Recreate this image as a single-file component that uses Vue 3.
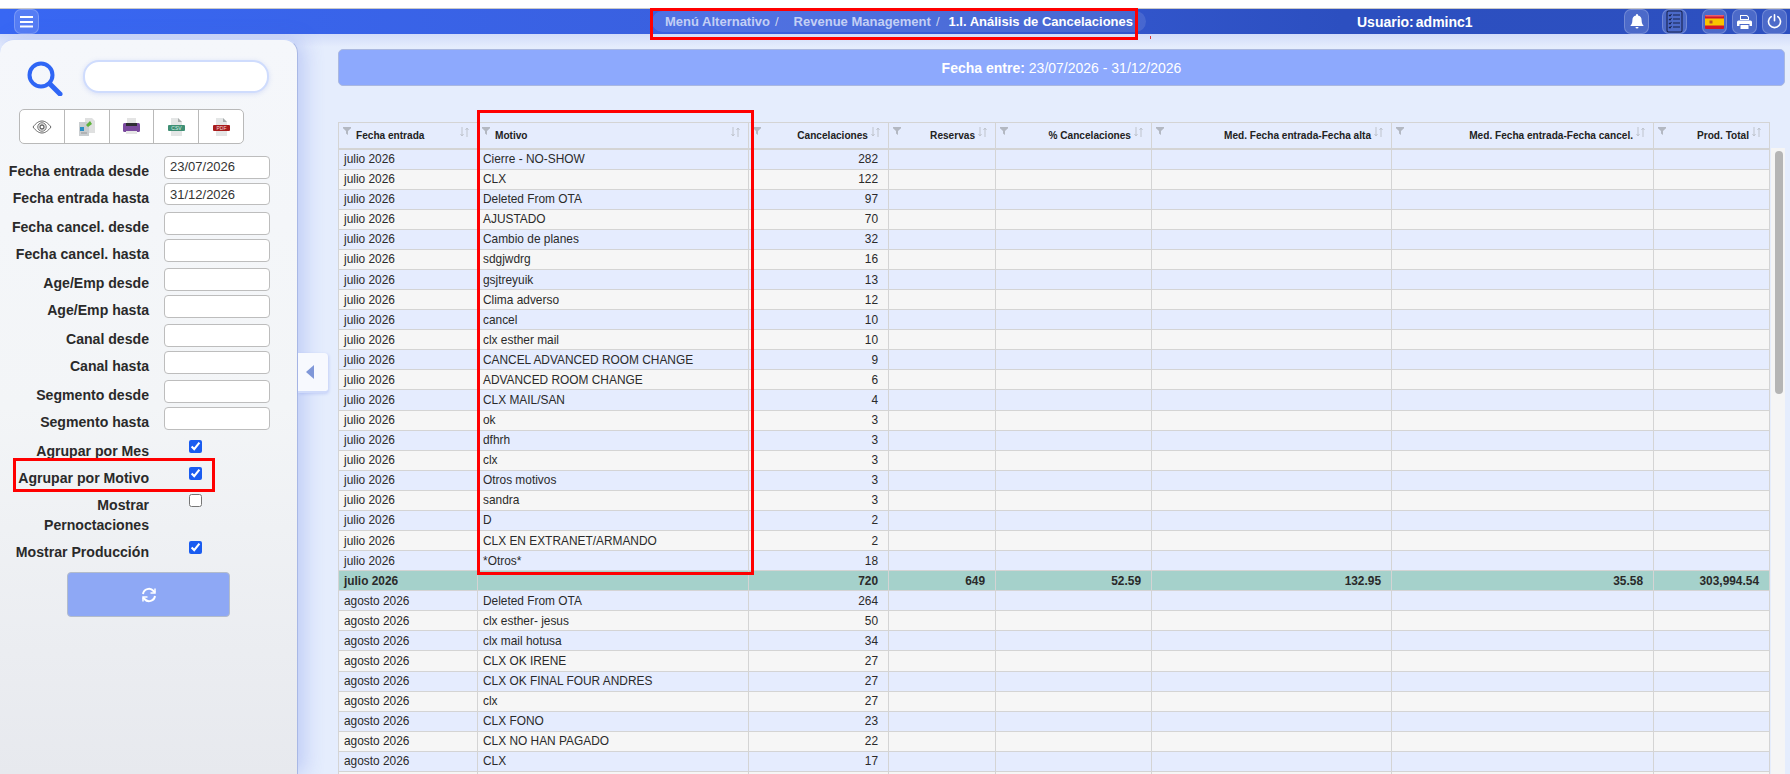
<template>
  <div class="page">
    <div class="top-strip"></div>
    <header class="topbar">
      <button class="bar-btn menu-btn">
        <svg width="13" height="12" viewBox="0 0 13 12"><path d="M0 1h13M0 6h13M0 10.6h13" stroke="#fff" stroke-width="2"/></svg>
      </button>
      <nav class="crumbs">
        <span>Menú Alternativo</span><i>/</i>
        <span>Revenue Management</span><i>/</i>
        <b>1.I. Análisis de Cancelaciones</b>
      </nav>
      <div class="user"><b>Usuario:</b><b class="user-name">adminc1</b></div>
      <div class="bar-icons">
        <button class="bar-btn">
          <svg width="14" height="15" viewBox="0 0 14 15"><path d="M7 0a1 1 0 0 1 1 1v.6A4.6 4.6 0 0 1 11.6 6c0 3.4 1 4.8 2.2 6H.2c1.200-1.200 2.200-2.600 2.200-6A4.600 4.600 0 0 1 6 1.600V1a1 1 0 0 1 1-1zM5.500 13h3a1.500 1.500 0 0 1-3 0z" fill="#fff"/></svg>
        </button>
        <button class="bar-btn list-btn">
          <svg width="17" height="23" viewBox="0 0 17 23" fill="none" stroke="#16224f" stroke-width="1.100"><rect x="1" y="1" width="15" height="21" rx="1.500"/><path d="M7 5h7M7 9h7M7 13h7M7 17h7M3 5l1 1 1.500-2M3 9l1 1 1.500-2M3 13l1 1 1.500-2M3 17l1 1 1.500-2"/></svg>
        </button>
        <button class="bar-btn flag-btn">
          <svg width="19" height="14" viewBox="0 0 19 14"><rect width="19" height="14" rx="1" fill="#d0142c"/><rect y="3.500" width="19" height="7" fill="#f8c300"/><rect width="19" height="1.500" rx="1" fill="#e8606c"/><rect x="4.500" y="5.500" width="3" height="3" fill="#b5502a"/></svg>
        </button>
        <button class="bar-btn">
          <svg width="15" height="14" viewBox="0 0 15 14"><path d="M3 0h7l2 2v3H3zM4 1v3h7V2.500L9.500 1zM1.500 5.500h12A1.500 1.500 0 0 1 15 7v4h-2.500V9h-10v2H0V7a1.500 1.500 0 0 1 1.500-1.500zM3.500 10h8v4h-8z" fill="#fff"/></svg>
        </button>
        <button class="bar-btn">
          <svg width="15" height="15" viewBox="0 0 15 15" fill="none" stroke="#fff" stroke-width="1.600" stroke-linecap="round"><path d="M4.200 2.600a6 6 0 1 0 6.600 0M7.500 .8v6"/></svg>
        </button>
      </div>
    </header>

    <div class="main">
      <aside class="sidebar">
        <div class="search-row">
          <svg class="search-icon" width="36" height="35" viewBox="0 0 36 35" fill="none" stroke="#2f66f5"><circle cx="14" cy="14" r="11.500" stroke-width="4"/><path d="M23 23l10 10" stroke-width="5" stroke-linecap="round"/></svg>
          <input class="search-input" type="text" />
        </div>

        <div class="tool-group">
          <button>
            <svg width="20" height="14" viewBox="0 0 20 14" fill="none" stroke="#666"><path d="M1 7c3-4 6-6 9-6s6 2 9 6c-3 4-6 6-9 6s-6-2-9-6z"/><circle cx="10" cy="7" r="4.200"/><circle cx="10" cy="7" r="2" stroke-width="1.300"/></svg>
          </button>
          <button>
            <svg width="16" height="18" viewBox="0 0 16 18"><path d="M6 0h7l3 3v12H6z" fill="#dfe0e0"/><path d="M0 4h8l2 2v12H0z" fill="#c9cdd0"/><rect x="1" y="9" width="4" height="4" fill="#2a8fc4"/><path d="M7 7l4-4 2 3-4 3z" fill="#5fb33c"/><path d="M2 15h6" stroke="#999"/></svg>
          </button>
          <button>
            <svg width="17" height="17" viewBox="0 0 17 17"><rect x="4" y="0" width="9" height="5" fill="#e4e4e4"/><rect x="0" y="5" width="17" height="9" rx="1.500" fill="#7b4a9e"/><rect x="3" y="5" width="11" height="3" fill="#2e2e33"/><rect x="3" y="13" width="11" height="3" fill="#e6e6e6"/></svg>
          </button>
          <button>
            <svg width="17" height="18" viewBox="0 0 17 18"><path d="M3 0h7l4 4v14H3z" fill="#e4e6e6"/><path d="M10 0v4h4z" fill="#a9adad"/><rect x="0" y="7" width="17" height="6" rx="1" fill="#3f8f74"/><text x="8.500" y="11.800" text-anchor="middle" font-size="5" font-family="Liberation Sans" fill="#d9efe7">CSV</text></svg>
          </button>
          <button>
            <svg width="17" height="18" viewBox="0 0 17 18"><path d="M3 0h7l4 4v14H3z" fill="#e4e6e6"/><path d="M10 0v4h4z" fill="#a9adad"/><rect x="0" y="7" width="17" height="6" rx="1" fill="#a81c1c"/><text x="8.500" y="11.800" text-anchor="middle" font-size="5" font-family="Liberation Sans" fill="#f3d9d9">PDF</text></svg>
          </button>
        </div>

        <form class="filters" @submit.prevent>
          <div v-for="(pair, i) in fieldPairs" :key="i" class="pair">
            <label v-for="f in pair" :key="f.label" class="field">
              <span>{{ f.label }}</span>
              <input type="text" :value="f.value" :class="{ clipped: f.clipped }" />
            </label>
          </div>
        </form>

        <div class="checks">
          <label v-for="c in checks" :key="c.label" class="check">
            <span>{{ c.label }}</span>
            <input type="checkbox" :checked="c.on" />
          </label>
        </div>

        <button class="refresh">
          <svg width="16" height="16" viewBox="0 0 16 16" fill="none" stroke="#fff" stroke-width="2"><path d="M2 7a6 6 0 0 1 10.500-3L14 5.500M14 9a6 6 0 0 1-10.500 3L2 10.500"/><path d="M14 1.500v4.500H9.500M2 14.500V10h4.500" stroke-width="1.500"/></svg>
        </button>
      </aside>

      <button class="collapse"><span class="tri"></span></button>

      <section class="content">
        <div class="band"><b>Fecha entre:</b> 23/07/2026 - 31/12/2026</div>

        <div class="grid-wrap">
          <table class="grid">
            <colgroup>
              <col v-for="c in columns" :key="c.label" :style="{ width: c.width + 'px' }" />
            </colgroup>
            <thead>
              <tr>
                <th v-for="c in columns" :key="c.label">
                  <div class="th-in">
                    <svg class="funnel" width="8" height="8" viewBox="0 0 8 8"><path d="M0 0h8v1.200L5 4v4L3 6.500V4L0 1.200z" fill="#b3b8c2"/></svg>
                    <span class="th-label" :class="{ num: c.num }">{{ c.label }}</span>
                    <svg class="sort" width="9" height="10" viewBox="0 0 9 10" fill="none" stroke="#bfc4cd"><path d="M2 0v9M.5 7L2 9l1.500-2M7 10V1M5.500 3L7 1l1.500 2"/></svg>
                  </div>
                </th>
              </tr>
            </thead>
            <tbody>
              <tr v-for="(r, i) in rows" :key="i" :class="rowClass(r)">
                <td>{{ r.month }}</td>
                <td>{{ r.reason }}</td>
                <td class="num">{{ r.total ? r.total[0] : r.count }}</td>
                <td v-for="n in 5" :key="n" class="num">{{ r.total ? r.total[n] : '' }}</td>
              </tr>
            </tbody>
          </table>
          <div class="scroll-track"><div class="scroll-thumb"></div></div>
        </div>
      </section>
    </div>

    <!-- marcas rojas sobre la captura -->
    <div class="mark mark-crumbs"></div>
    <div class="mark mark-motivo"></div>
    <div class="mark mark-check"></div>
    <div class="mark-tick"></div>
  </div>
</template>

<script setup>
const fieldPairs = [
  [
    { label: 'Fecha entrada desde', value: '23/07/2026' },
    { label: 'Fecha entrada hasta', value: '31/12/2026', clipped: true }
  ],
  [
    { label: 'Fecha cancel. desde', value: '' },
    { label: 'Fecha cancel. hasta', value: '' }
  ],
  [
    { label: 'Age/Emp desde', value: '' },
    { label: 'Age/Emp hasta', value: '' }
  ],
  [
    { label: 'Canal desde', value: '' },
    { label: 'Canal hasta', value: '' }
  ],
  [
    { label: 'Segmento desde', value: '' },
    { label: 'Segmento hasta', value: '' }
  ]
]

const checks = [
  { label: 'Agrupar por Mes', on: true },
  { label: 'Agrupar por Motivo', on: true },
  { label: 'Mostrar Pernoctaciones', on: false },
  { label: 'Mostrar Producción', on: true }
]

const columns = [
  { label: 'Fecha entrada', width: 139 },
  { label: 'Motivo', width: 271 },
  { label: 'Cancelaciones', width: 140, num: true },
  { label: 'Reservas', width: 107, num: true },
  { label: '% Cancelaciones', width: 156, num: true },
  { label: 'Med. Fecha entrada-Fecha alta', width: 240, num: true },
  { label: 'Med. Fecha entrada-Fecha cancel.', width: 262, num: true },
  { label: 'Prod. Total', width: 116, num: true }
]

const julio = [
  ['Cierre - NO-SHOW', 282], ['CLX', 122], ['Deleted From OTA', 97], ['AJUSTADO', 70],
  ['Cambio de planes', 32], ['sdgjwdrg', 16], ['gsjtreyuik', 13], ['Clima adverso', 12],
  ['cancel', 10], ['clx esther mail', 10], ['CANCEL ADVANCED ROOM CHANGE', 9],
  ['ADVANCED ROOM CHANGE', 6], ['CLX MAIL/SAN', 4], ['ok', 3], ['dfhrh', 3], ['clx', 3],
  ['Otros motivos', 3], ['sandra', 3], ['D', 2], ['CLX EN EXTRANET/ARMANDO', 2], ['*Otros*', 18]
]
const agosto = [
  ['Deleted From OTA', 264], ['clx esther- jesus', 50], ['clx mail hotusa', 34],
  ['CLX OK IRENE', 27], ['CLX OK FINAL FOUR ANDRES', 27], ['clx', 27], ['CLX FONO', 23],
  ['CLX NO HAN PAGADO', 22], ['CLX', 17], ['', '']
]

const toRows = (month, list) =>
  list.map(([reason, count], idx) => ({ month: reason ? month : '', reason, count, odd: idx % 2 === 0 }))

const rows = [
  ...toRows('julio 2026', julio),
  { month: 'julio 2026', reason: '', total: ['720', '649', '52.59', '132.95', '35.58', '303,994.54'] },
  ...toRows('agosto 2026', agosto)
]

function rowClass(r) {
  if (r.total) return 'total'
  return r.odd ? 'odd' : 'even'
}
</script>

<style>
html, body { margin: 0; background: #e5edfd; overflow: hidden; }
</style>

<style scoped>
.page {
  position: relative;
  width: 1790px; height: 774px;
  overflow: hidden;
  background: #e5edfd;
  font-family: "Liberation Sans", Arial, sans-serif;
  color: #262626;
}
.top-strip { height: 8px; background: #fff; border-bottom: 1px solid #c9c9c9; }

/* TOP BAR */
.topbar {
  height: 25px;
  display: flex; align-items: center;
  background: linear-gradient(90deg, #3867f3 0%, #3a5fdc 45%, #2c4fc0 75%, #2d50c0 100%);
  position: relative;
}
.bar-btn {
  width: 25px; height: 25px; padding: 0;
  display: flex; align-items: center; justify-content: center;
  background: rgba(255, 255, 255, 0.15);
  border: 1px solid rgba(255, 255, 255, 0.22);
  border-radius: 7px;
}
.menu-btn { margin-left: 14px; }
.crumbs {
  margin-left: 613px; width: 494px; height: 21px;
  box-sizing: border-box; padding-left: 13px;
  display: flex; align-items: center;
  background: rgba(255, 255, 255, 0.11);
  border-radius: 11px;
  font-size: 13px; font-weight: 700; color: #c3cff5;
  white-space: nowrap;
}
.crumbs i { font-style: normal; font-weight: 400; margin: 0 15px 0 5px; color: #cdd5ee; }
.crumbs b { color: #fff; margin-left: -6px; }
.user { margin-left: 211px; width: 267px; font-size: 14px; color: #fff; white-space: nowrap; }
.user-name { margin-left: 2px; }
.bar-icons { display: flex; }
.bar-icons .bar-btn:nth-child(2) { margin-left: 13px; }
.bar-icons .bar-btn:nth-child(3) { margin-left: 15px; }
.bar-icons .bar-btn:nth-child(4),
.bar-icons .bar-btn:nth-child(5) { margin-left: 5px; }

/* MAIN */
.main {
  display: flex; position: relative;
  height: 740px;
  background: linear-gradient(180deg, #d2dcf9 0, #e5edfd 13px);
}

/* SIDEBAR */
.sidebar {
  width: 298px; margin-top: 5px;
  flex: none; box-sizing: border-box;
  background: linear-gradient(180deg, #f5f7fb 0%, #f3f5f7 50%, #e7e9ee 100%);
  border-radius: 14px 14px 0 0;
  border-top: 1px solid #c9d6fb;
  border-right: 1px solid #a9b8e5;
  box-shadow: 7px 0 20px rgba(70, 100, 225, 0.24);
  z-index: 1;
}
.search-row { display: flex; align-items: flex-start; padding: 20px 0 0 27px; gap: 20px; }
.search-icon { margin-top: 1px; }
.search-input {
  width: 186px; height: 33px; box-sizing: border-box;
  background: #fff;
  border: 2px solid #cfdcfd; border-radius: 16px;
  box-shadow: 0 1px 5px rgba(80, 110, 230, 0.18);
  outline: none;
}
.tool-group {
  display: flex; margin: 13px 0 0 19px;
  width: 225px; height: 35px; box-sizing: border-box;
  background: #fff;
  border: 1px solid #b9b9b9; border-radius: 5px;
}
.tool-group button {
  flex: 1; padding: 0;
  background: transparent;
  border: 0; border-left: 1px solid #b9b9b9;
  display: flex; align-items: center; justify-content: center;
}
.tool-group button:first-child { border-left: 0; }

.filters { display: flex; flex-direction: column; gap: 6px; margin-top: 12px; }
.pair { display: flex; flex-direction: column; gap: 4px; }
.field { display: flex; align-items: flex-start; }
.field span {
  width: 149px; text-align: right;
  font-size: 14.100px; font-weight: 700; line-height: 16px;
  padding-top: 7px; color: #2a2a2a;
  white-space: nowrap;
}
.field input {
  width: 106px; height: 23px; margin-left: 15px;
  box-sizing: border-box; padding: 0 5px 2px;
  background: #fff;
  border: 1px solid #bdbdbd; border-radius: 4px;
  font: 13px "Liberation Sans", Arial, sans-serif; color: #333;
  outline: none;
}
.field input.clipped { height: 22px; padding-bottom: 0; }

.checks { margin-top: 10px; }
.check { display: flex; align-items: flex-start; }
.check span {
  width: 149px; text-align: right;
  font-size: 14.100px; font-weight: 700; line-height: 20px;
  padding: 1px 0 6px; color: #2a2a2a;
}
.check input {
  width: 13px; height: 13px;
  margin: 0 0 0 40px;
  accent-color: #1a5cf0;
}
.refresh {
  display: flex; align-items: center; justify-content: center;
  width: 163px; height: 45px;
  margin: 4px 0 0 67px;
  background: #8ea8f5;
  border: 1px solid #b3bccb; border-radius: 4px;
}

/* COLLAPSE TAB */
.collapse {
  position: absolute; left: 298px; top: 319px;
  width: 30px; height: 40px; padding: 0 0 0 8px;
  display: flex; align-items: center;
  background: #f7f9fe;
  border: 0; border-bottom: 2px solid #cfdafa;
  border-radius: 0 4px 4px 0;
  box-shadow: 1px 1px 3px rgba(70, 100, 225, 0.2);
  z-index: 2;
}
.tri {
  width: 0; height: 0;
  border-right: 8px solid #7f97d8;
  border-top: 7.500px solid transparent; border-bottom: 7.500px solid transparent;
}

/* CONTENT */
.content { flex: 1; min-width: 0; padding: 15px 5px 0 40px; }
.band {
  height: 37px; box-sizing: border-box; padding-top: 1px;
  display: flex; align-items: center; justify-content: center;
  gap: 4px;
  background: #8da9fd;
  border: 1px solid #aab8e0; border-radius: 5px;
  font-size: 14px; font-weight: 400; color: #fff;
}
.grid-wrap { display: flex; gap: 1px; margin-top: 36px; }
.grid {
  table-layout: fixed; width: 1431px; flex: none;
  border-collapse: collapse;
  font-size: 11.900px;
}
.grid th, .grid td { border: 1px solid #d4d4d4; padding: 0; }
.grid th { background: #e5ecfd; border-bottom: 2px solid #d4d4d4; height: 25px; }
.th-in { display: flex; align-items: flex-start; height: 25px; padding: 4px 8px 0 4px; box-sizing: border-box; }
.funnel { flex: none; }
.th-label {
  flex: 1; min-width: 0; margin: 3px 3px 0 5px;
  font-size: 10.100px; line-height: 12px; font-weight: 700; text-align: left;
  color: #222; white-space: nowrap;
}
.th-label.num { text-align: right; }
.sort { flex: none; }
.grid td {
  height: 20.090px; box-sizing: border-box;
  padding: 0 10px 0 5px;
  line-height: 14px; color: #2a2a2a;
  white-space: nowrap; overflow: hidden;
}
.grid td.num { text-align: right; }
.odd td { background: #e5ecfe; }
.even td { background: #f6f6f6; }
.total td { background: #a5d1cb; font-weight: 700; }

.scroll-track {
  width: 14px; flex: none; margin-top: 26px; height: 640px;
  padding: 3px 2px 0 4px; box-sizing: border-box;
  background: #f5f5f5;
}
.scroll-thumb { width: 8px; height: 243px; background: #b5b5b5; border-radius: 4px; }

/* MARKS */
.mark { position: absolute; border: 3px solid #ff0000; box-sizing: border-box; pointer-events: none; z-index: 5; }
.mark-crumbs { left: 650px; top: 8px; width: 488px; height: 32px; }
.mark-motivo { left: 477px; top: 110px; width: 277px; height: 465px; }
.mark-check { left: 13px; top: 458px; width: 202px; height: 34px; }
.mark-tick { position: absolute; left: 1150px; top: 36px; width: 1px; height: 3px; background: #e23a3a; }
</style>
